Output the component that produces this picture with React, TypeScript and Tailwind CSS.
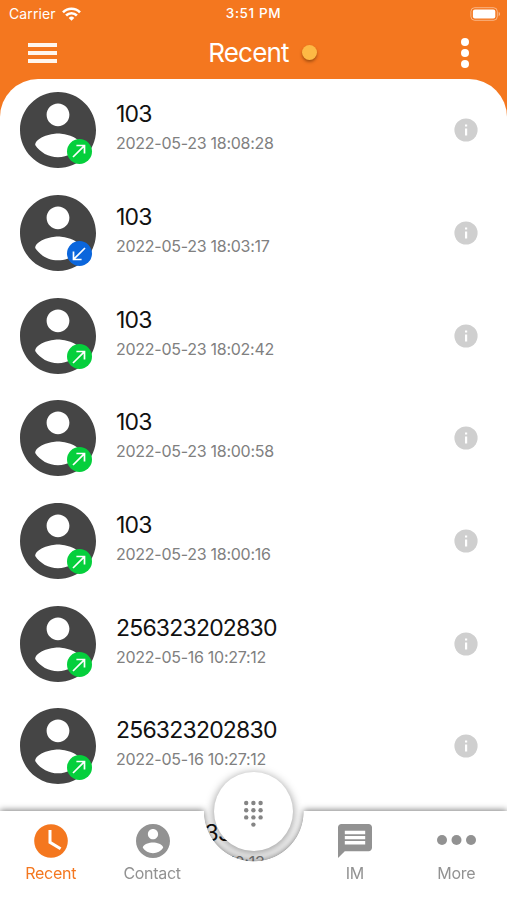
import React from 'react';

interface Call {
  name: string;
  time: string;
  direction: 'in' | 'out';
}

const calls: Call[] = [
  { name: '103', time: '2022-05-23 18:08:28', direction: 'out' },
  { name: '103', time: '2022-05-23 18:03:17', direction: 'in' },
  { name: '103', time: '2022-05-23 18:02:42', direction: 'out' },
  { name: '103', time: '2022-05-23 18:00:58', direction: 'out' },
  { name: '103', time: '2022-05-23 18:00:16', direction: 'out' },
  { name: '256323202830', time: '2022-05-16 10:27:12', direction: 'out' },
  { name: '256323202830', time: '2022-05-16 10:27:12', direction: 'out' },
  { name: '256323133830', time: '2022-05-16 10:10:13', direction: 'out' },
];

const PersonIcon: React.FC<{ className?: string }> = ({ className }) => (
  <svg className={className} viewBox="2 2 20 20" fill="currentColor">
    <path d="M12 2C6.48 2 2 6.48 2 12s4.48 10 10 10 10-4.48 10-10S17.52 2 12 2zm0 3c1.66 0 3 1.34 3 3s-1.34 3-3 3-3-1.34-3-3 1.34-3 3-3zm0 14.2c-2.5 0-4.71-1.28-6-3.22.03-1.99 4-3.08 6-3.08 1.99 0 5.97 1.09 6 3.08-1.29 1.94-3.5 3.22-6 3.22z" />
  </svg>
);

const StatusBar: React.FC = () => (
  <div className="grid grid-cols-3 items-center h-[27px] pl-[9px] pr-[6px] text-white">
    <div className="flex items-center gap-[6px]">
      <span className="text-[14px] tracking-[0.1px]">Carrier</span>
      <svg className="w-[19px] h-[14px]" viewBox="0 0 19 14" fill="none" stroke="currentColor" strokeWidth="2.6">
        <path d="M1 5.3a12 12 0 0 1 17 0" />
        <path d="M4.1 8.5a7.6 7.6 0 0 1 10.8 0" />
        <path d="M9.5 13.7 6.7 10.9a4 4 0 0 1 5.6 0z" fill="currentColor" stroke="none" />
      </svg>
    </div>
    <span className="text-[13.5px] font-medium text-center tracking-[0.6px] pr-[3px]">3:51 PM</span>
    <svg className="w-[31px] h-[14px] justify-self-end" viewBox="0 0 31 14" fill="none">
      <rect x="0.9" y="0.7" width="26.4" height="12.6" rx="3.8" stroke="#fff" strokeOpacity="0.45" />
      <rect x="2.9" y="2.6" width="22.4" height="8.8" rx="2" fill="#fff" />
      <path d="M28.7 4.8c1.8.7 1.8 3.7 0 4.4z" fill="#fff" fillOpacity="0.5" />
    </svg>
  </div>
);

const Header: React.FC = () => (
  <header className="h-[79px] shrink-0">
    <StatusBar />
    <div className="flex items-center justify-between h-[51px] pl-[28px] pr-[38px] text-white">
      <button aria-label="Menu" className="flex flex-col gap-[4px] w-[29px]">
        <span className="h-[4px] bg-[#fff6ee]" />
        <span className="h-[4px] bg-[#fff6ee]" />
        <span className="h-[4px] bg-[#fff6ee]" />
      </button>
      <div className="flex items-center gap-[13px] pl-[7px]">
        <h1 className="text-[26px] leading-[30px] tracking-[-0.8px]">Recent</h1>
        <span className="w-[15px] h-[15px] rounded-full bg-[#fdb945] shadow-[0_2px_3px_rgba(90,40,0,0.5)]" />
      </div>
      <button aria-label="Options" className="flex flex-col gap-[3px]">
        <span className="w-[8px] h-[8px] rounded-full bg-white" />
        <span className="w-[8px] h-[8px] rounded-full bg-white" />
        <span className="w-[8px] h-[8px] rounded-full bg-white" />
      </button>
    </div>
  </header>
);

const CallRow: React.FC<{ call: Call }> = ({ call }) => (
  <li className="flex items-center h-[102.67px] shrink-0 pl-[20px] pr-[29px]">
    <div className="relative w-[76px] h-[76px] shrink-0">
      <PersonIcon className="w-full h-full text-[#454545]" />
      <span
        className={`absolute left-[46.5px] top-[46.5px] w-[25px] h-[25px] rounded-full flex items-center justify-center ${
          call.direction === 'out' ? 'bg-[#05cf3c]' : 'bg-[#0b66dc]'
        }`}
      >
        <svg
          className={call.direction === 'out' ? 'w-[14px] h-[14px]' : 'w-[14px] h-[14px] rotate-180'}
          viewBox="0 0 14 14"
          fill="none"
          stroke="#fff"
          strokeWidth="1.7"
        >
          <path d="M1 13 12.2 1.8M4.4 1.5h8.1v8.1" />
        </svg>
      </span>
    </div>
    <div className="flex-1 pl-[20px] pb-[7px]">
      <div className="text-[23px] leading-[30px] tracking-[-0.8px] text-[#111]">{call.name}</div>
      <div className="text-[16px] leading-[22px] mt-[3px] tracking-[-0.27px] text-[#808080]">{call.time}</div>
    </div>
    <svg className="w-[24px] h-[24px]" viewBox="0 0 24 24">
      <circle cx="12" cy="12" r="11.6" fill="#cfcfcf" />
      <path d="M11 6.4h2.2v2.2H11zM11 10.6h2.2v7H11z" fill="#fff" />
    </svg>
  </li>
);

const tabClass = 'flex flex-col items-center w-[101.4px] pt-[13px] text-[16px] leading-[22px] tracking-[-0.3px]';

const TabBar: React.FC = () => (
  <div className="absolute inset-x-0 bottom-0 h-[89px] text-[#929292]">
    <div className="h-full drop-shadow-[0_-1px_3px_rgba(0,0,0,0.5)]">
      <nav className="flex h-full bg-white [mask-image:radial-gradient(circle_at_253.8px_0.5px,transparent_49.5px,black_50.2px)]">
        <button className={`${tabClass} text-[#f4771f]`}>
          <svg className="w-[34px] h-[34px] mb-[4px]" viewBox="0 0 34 34">
            <circle cx="17" cy="17" r="16.8" fill="currentColor" />
            <path d="M16 6v12.3l10.6 6.4" fill="none" stroke="#fff" strokeWidth="3" />
          </svg>
          Recent
        </button>
        <button className={tabClass}>
          <PersonIcon className="w-[34px] h-[34px] mb-[4px] translate-x-[1px]" />
          Contact
        </button>
        <div className="w-[101.4px]" />
        <button className={tabClass}>
          <svg className="w-[34px] h-[34px] mb-[4px]" viewBox="2 2 20 20" fill="currentColor">
            <path d="M20 2H4c-1.1 0-1.99.9-1.99 2L2 22l4-4h14c1.1 0 2-.9 2-2V4c0-1.1-.9-2-2-2zm-2 12H6v-2h12v2zm0-3H6V9h12v2zm0-3H6V6h12v2z" />
          </svg>
          IM
        </button>
        <button className={tabClass}>
          <svg className="w-[40px] h-[34px] mb-[4px]" viewBox="0 0 40 34" fill="currentColor">
            <circle cx="6" cy="16" r="5" />
            <circle cx="20.5" cy="16" r="5" />
            <circle cx="35" cy="16" r="5" />
          </svg>
          More
        </button>
      </nav>
    </div>
    <button
      aria-label="Dial pad"
      className="absolute left-[214.3px] top-[-39px] w-[79px] h-[79px] rounded-full bg-white flex items-center justify-center shadow-[0_2px_9px_1px_rgba(0,0,0,0.38)]"
    >
      <svg className="w-[20px] h-[28px] mt-[4px]" viewBox="0 0 20 28" fill="#858585">
        {[3, 10.2, 17.4].map((y) => [2.2, 9.4, 16.6].map((x) => <circle key={`${x}-${y}`} cx={x} cy={y} r="2.2" />))}
        <circle cx="9.4" cy="24.6" r="2.2" />
      </svg>
    </button>
  </div>
);

const App: React.FC = () => (
  <div className="relative flex flex-col w-full h-[900px] overflow-hidden bg-[#f4771f] font-['Inter','Liberation_Sans',sans-serif]">
    <Header />
    <main className="flex-1 min-h-0 overflow-hidden bg-white rounded-t-[38px]">
      <ul className="flex flex-col">
        {calls.map((call, i) => (
          <CallRow key={i} call={call} />
        ))}
      </ul>
    </main>
    <TabBar />
  </div>
);

export default App;
